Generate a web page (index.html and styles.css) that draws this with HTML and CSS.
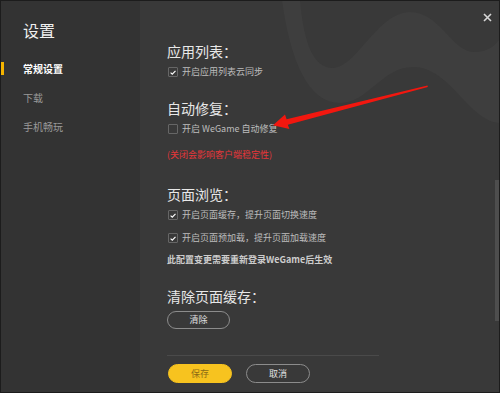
FILE: index.html
```html
<!DOCTYPE html>
<html lang="zh-CN">
<head>
<meta charset="utf-8">
<title>设置</title>
<link rel="stylesheet" href="styles.css">
</head>
<body>
<div class="window">
  <aside class="sidebar">
    <h1 class="side-title">设置</h1>
    <nav class="nav">
      <a class="nav-item active">常规设置</a>
      <a class="nav-item">下载</a>
      <a class="nav-item">手机畅玩</a>
    </nav>
  </aside>
  <main class="main">
    <svg class="waves" width="359" height="391" viewBox="140 1 359 391" aria-hidden="true">
      <path d="M300 0 C304 45 314 68 333 68 C356 68 378 12 410 12 C440 12 452 52 474 52 C488 52 494 46 499 40 L499 123 C468 120 450 67 413 67 C382 67 368 103 340 103 C308 103 290 60 282 0 Z" fill="#3e3e3e"/>
    </svg>
    <button class="close" aria-label="关闭">
      <svg width="9" height="9" viewBox="0 0 9 9"><path d="M1 1 L8 8 M8 1 L1 8" stroke="#d6d6d6" stroke-width="1.6"/></svg>
    </button>
    <div class="content">
      <section class="group">
        <h2 class="group-title">应用列表：</h2>
        <label class="check"><span class="box"><svg width="9" height="9" viewBox="0 0 9 9"><path d="M1.8 4.6 L3.7 6.4 L7.3 2.6" fill="none" stroke="#fff" stroke-width="1.3"/></svg></span>开启应用列表云同步</label>
      </section>
      <section class="group g-repair">
        <h2 class="group-title">自动修复：</h2>
        <label class="check"><span class="box"></span>开启 WeGame 自动修复</label>
        <p class="warn">(关闭会影响客户端稳定性)</p>
      </section>
      <section class="group g-browse">
        <h2 class="group-title">页面浏览：</h2>
        <label class="check"><span class="box"><svg width="9" height="9" viewBox="0 0 9 9"><path d="M1.8 4.6 L3.7 6.4 L7.3 2.6" fill="none" stroke="#fff" stroke-width="1.3"/></svg></span>开启页面缓存，提升页面切换速度</label>
        <label class="check check-next"><span class="box"><svg width="9" height="9" viewBox="0 0 9 9"><path d="M1.8 4.6 L3.7 6.4 L7.3 2.6" fill="none" stroke="#fff" stroke-width="1.3"/></svg></span>开启页面预加载，提升页面加载速度</label>
        <p class="note">此配置变更需要重新登录WeGame后生效</p>
      </section>
      <section class="group g-clear">
        <h2 class="group-title">清除页面缓存：</h2>
        <button class="btn btn-outline btn-clear">清除</button>
      </section>
      <footer class="footer">
        <button class="btn btn-primary">保存</button>
        <button class="btn btn-outline">取消</button>
      </footer>
    </div>
    <div class="scrollbar"></div>
  </main>
</div>
<svg class="arrow" width="500" height="393" viewBox="0 0 500 393" aria-hidden="true">
  <polygon points="427.5,85.4 286.6,119.2 285,114.4 273,125.2 289.4,129 287.8,124.8 427.8,87" fill="#f2170f"/>
</svg>
</body>
</html>
```
FILE: styles.css
```css
* { box-sizing: border-box; }
html, body { margin: 0; padding: 0; }
body {
  position: relative;
  width: 500px;
  height: 393px;
  background: #1b1b1b;
  font-family: "Noto Sans CJK SC", "Noto Sans", sans-serif;
  overflow: hidden;
}
.window {
  width: 500px;
  height: 393px;
  border: 1px solid #1c1c1c;
  display: flex;
  background: #393939;
}
.sidebar {
  width: 139px;
  flex: none;
  background: #333333;
  padding-top: 19px;
}
.side-title {
  margin: 0 0 0 22px;
  font-size: 16px;
  line-height: 20px;
  font-weight: normal;
  color: #f0f0f0;
}
.nav {
  display: flex;
  flex-direction: column;
  gap: 16px;
  margin-top: 22px;
}
.nav-item {
  display: block;
  padding-left: 22px;
  font-size: 10px;
  line-height: 13px;
  color: #9a9a9a;
}
.nav-item.active {
  color: #ffffff;
  font-weight: bold;
  box-shadow: inset 3px 0 0 #f5b400;
}
.main {
  position: relative;
  flex: 1;
  overflow: hidden;
  background: #393939;
}
.waves {
  position: absolute;
  left: 0;
  top: 0;
}
.close {
  position: absolute;
  left: 343px;
  top: 12px;
  width: 9px;
  height: 9px;
  padding: 0;
  border: 0;
  background: none;
  display: flex;
}
.content {
  position: relative;
  width: 239px;
  padding: 42px 0 0 27px;
}
.group-title {
  margin: 0;
  font-size: 14px;
  line-height: 16px;
  font-weight: normal;
  color: #e8e8e8;
}
.check {
  display: flex;
  align-items: center;
  gap: 4px;
  margin-top: 7px;
  height: 12px;
  font-size: 9px;
  line-height: 12px;
  color: #bdbdbd;
  white-space: nowrap;
}
.check-next { margin-top: 11px; }
.box {
  width: 10px;
  height: 10px;
  flex: none;
  margin-left: 1px;
  border: 1px solid #666666;
  border-radius: 1px;
  display: flex;
  align-items: center;
  justify-content: center;
}
.g-repair { margin-top: 22px; }
.warn {
  margin: 14px 0 0;
  font-size: 9px;
  line-height: 12px;
  color: #e5363a;
}
.g-browse { margin-top: 25px; }
.note {
  margin: 10px 0 0;
  font-size: 9px;
  line-height: 12px;
  font-weight: bold;
  color: #cdcdcd;
  white-space: nowrap;
}
.g-clear { margin-top: 22px; }
.btn {
  width: 63px;
  height: 18px;
  border-radius: 10px;
  padding: 0;
  font-family: inherit;
  font-size: 9px;
  line-height: 16px;
  text-align: center;
}
.btn-outline {
  border: 1px solid #8c8c8c;
  background: transparent;
  color: #e0e0e0;
}
.btn-clear { display: block; margin-top: 7px; }
.btn-primary {
  border: 1px solid #f7c31f;
  background: #f7c31f;
  color: #8b6b16;
}
.footer {
  margin-top: 26px;
  border-top: 1px solid #4a4a4a;
  padding-top: 8px;
  display: flex;
  gap: 14px;
  padding-left: 1px;
}
.footer .btn { height: 19px; width: 64px; }
.scrollbar {
  position: absolute;
  right: 0;
  top: 179px;
  width: 4px;
  height: 141px;
  background: #4e4e4e;
}
.arrow {
  position: absolute;
  left: 0;
  top: 0;
  pointer-events: none;
}
```
